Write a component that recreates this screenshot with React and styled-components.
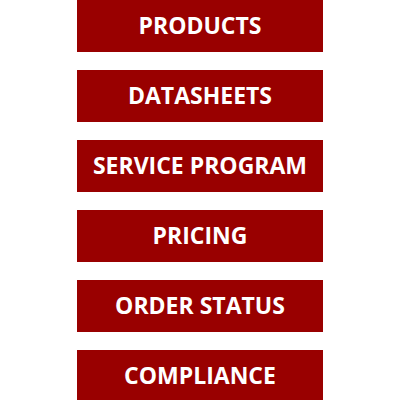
import styled, {createGlobalStyle} from 'styled-components'

const GlobalStyle = createGlobalStyle`
  body {
    margin: 0;
    background: #fff;
    font-family: "Open Sans", "Liberation Sans", sans-serif;
  }
`

const links = [
  'PRODUCTS',
  'DATASHEETS',
  'SERVICE PROGRAM',
  'PRICING',
  'ORDER STATUS',
  'COMPLIANCE',
]

export default () => (
  <>
    <GlobalStyle/>
    <Menu>
      {links.map(label => (
        <MenuButton key={label} href='#'>{label}</MenuButton>
      ))}
    </Menu>
  </>
)

const Menu = styled.nav`
  width: 246px;
  margin: 0 auto;
  display: flex;
  flex-direction: column;
  gap: 18.5px;
`

const MenuButton = styled.a`
  box-sizing: border-box;
  height: 51.5px;
  display: flex;
  align-items: center;
  justify-content: center;
  color: #fff;
  font-size: 23px;
  font-weight: 700;
  line-height: 1;
  text-decoration: none;
  background: #990000;
  padding-bottom: 1px;
`
